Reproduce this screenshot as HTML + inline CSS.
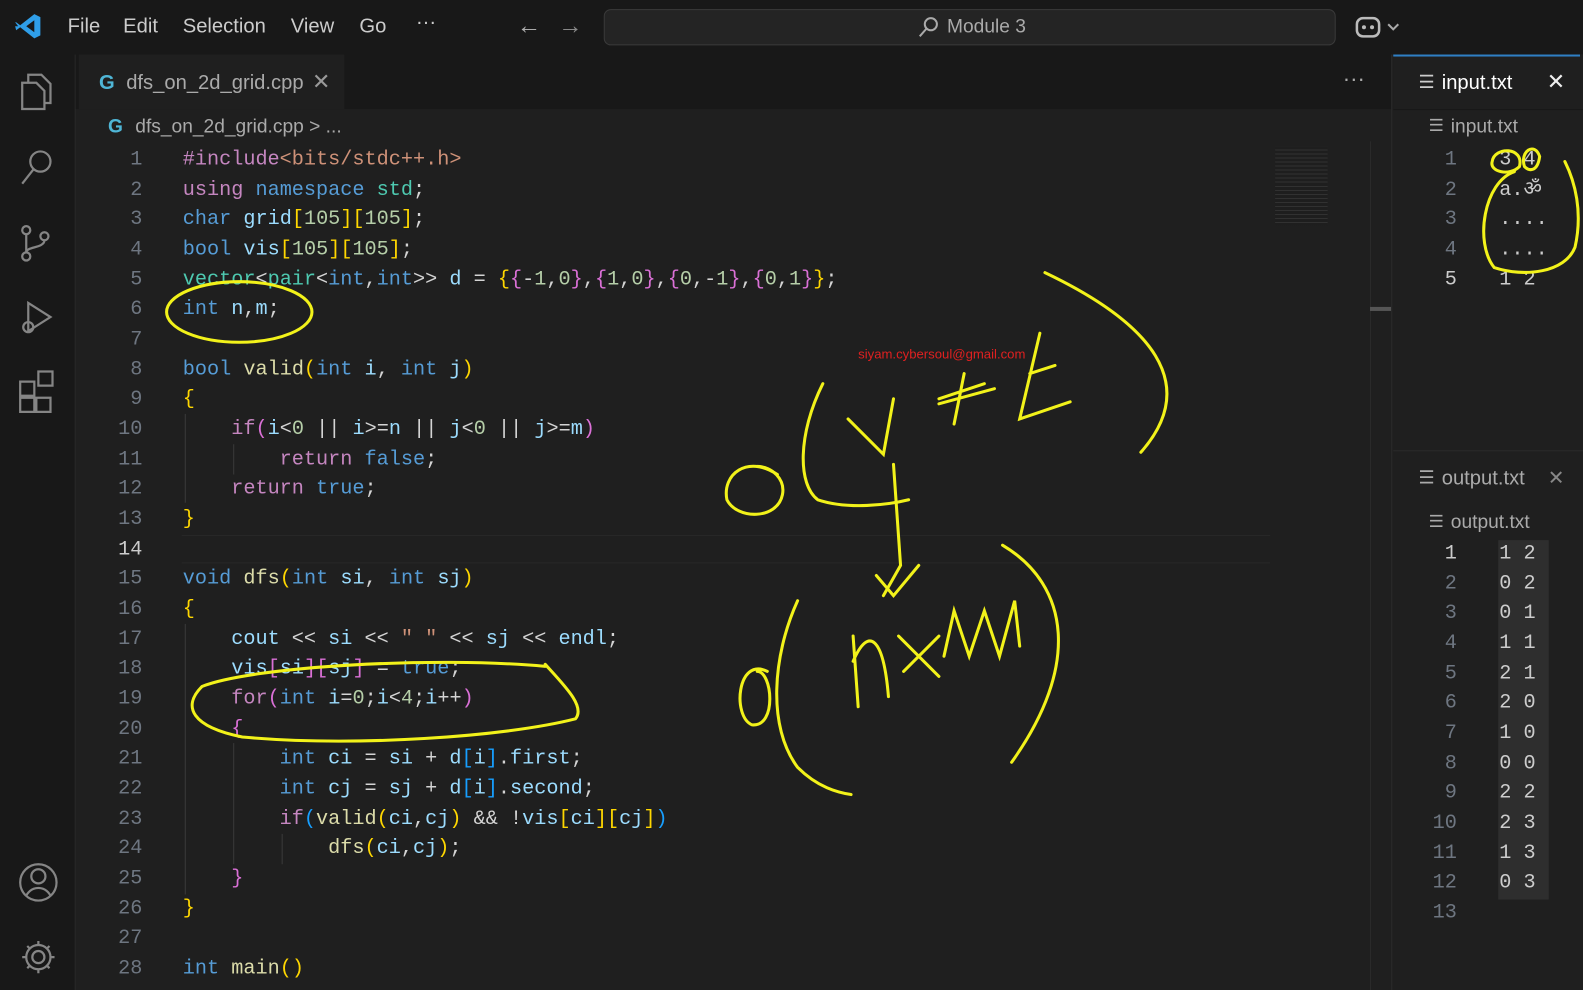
<!DOCTYPE html>
<html><head><meta charset="utf-8"><style>
*{margin:0;padding:0;box-sizing:border-box}
body{width:1583px;height:981px;background:#1f1f1f;overflow:hidden;font-family:"Liberation Sans",sans-serif;color:#ccc}
#wrap{position:relative;width:1568px;height:972px;transform:scale(1.0096);transform-origin:0 0}
.abs{position:absolute}
#title{left:0;top:0;width:1583px;height:54px;background:#181818}
.menu{top:15px;font-size:20px;color:#ccc}
#act{left:0;top:54px;width:75px;height:927px;background:#181818;border-right:1px solid #2a2a2a}
#tabs{left:75px;top:54px;width:1303px;height:54px;background:#181818}
.code{font-family:"Liberation Mono",monospace;font-size:20px;white-space:pre;line-height:29.67px}
.k{color:#569cd6}.c{color:#c586c0}.f{color:#dcdcaa}.v{color:#9cdcfe}.t{color:#4ec9b0}.n{color:#b5cea8}.s{color:#ce9178}.w{color:#d4d4d4}
.b1{color:#ffd700}.b2{color:#da70d6}.b3{color:#179fff}
.ln{color:#6e7681;text-align:right;width:60px}
#right{left:1378px;top:54px;width:205px;height:927px;background:#1f1f1f;border-left:1px solid #2b2b2b}
</style></head><body><div id="wrap">
<div id="title" class="abs"></div>
<svg class="abs" style="left:14px;top:12px" width="28" height="28" viewBox="0 0 28 28"><path d="M20 2 L26 5 V23 L20 26 L6 15 L2 18 L1 14 L4 14 1 10 2 10 6 13 Z" fill="#2f9ee8"/><path d="M20 8 V20 L12 14Z" fill="#181818"/></svg>
<div class="abs menu" style="left:67px">File</div>
<div class="abs menu" style="left:122px">Edit</div>
<div class="abs menu" style="left:181px">Selection</div>
<div class="abs menu" style="left:288px">View</div>
<div class="abs menu" style="left:356px">Go</div>
<div class="abs menu" style="left:412px;top:11px">···</div>
<div class="abs menu" style="left:512px;top:12px;font-size:24px;color:#aaa">←</div>
<div class="abs menu" style="left:553px;top:12px;font-size:24px;color:#888">→</div>
<div class="abs" style="left:598px;top:9px;width:725px;height:36px;background:#242424;border:1px solid #3a3a3a;border-radius:7px"></div>
<svg class="abs" style="left:908px;top:15px" width="24" height="24"><circle cx="14" cy="9" r="6" stroke="#aaa" stroke-width="2" fill="none"/><path d="M10 13 L3 21" stroke="#aaa" stroke-width="2"/></svg>
<div class="abs" style="left:938px;top:16px;font-size:19px;color:#aaa">Module 3</div>
<svg class="abs" style="left:1342px;top:14px" width="48" height="26"><rect x="2" y="4" width="22" height="18" rx="6" fill="none" stroke="#bbb" stroke-width="2.5"/><circle cx="9" cy="13" r="2" fill="#bbb"/><circle cx="17" cy="13" r="2" fill="#bbb"/><path d="M33 10 l5 5 5-5" stroke="#aaa" stroke-width="2" fill="none"/></svg>

<div id="act" class="abs"></div>
<svg class="abs" style="left:16px;top:68px" width="44" height="900" fill="none" stroke="#858585" stroke-width="2.2">
<path d="M6 14 h14 l8 8 v18 h-22z M12 14 v-8 h13 l9 9 v19 h-6"/>
<circle cx="24" cy="92" r="10"/><path d="M17 100 L6 114"/>
<circle cx="10" cy="160" r="4"/><circle cx="10" cy="186" r="4"/><circle cx="28" cy="166" r="4"/><path d="M10 164 v18 M28 170 c0 8 -18 6 -18 12"/>
<path d="M12 232 L34 246 L12 260 Z"/><circle cx="12" cy="256" r="5"/>
<path d="M4 310 h14 v14 h-14z M4 326 h14 v14 h-14z M20 326 h14 v14 h-14z M22 300 h14 v14 h-14z"/>
<circle cx="22" cy="806" r="18"/><circle cx="22" cy="800" r="7"/><path d="M10 819 c6 -10 18 -10 24 0"/>
<circle cx="22" cy="880" r="6"/><path d="M22 864 v4 M22 892 v4 M6 880 h4 M34 880 h4 M11 869 l3 3 M30 888 l3 3 M11 891 l3 -3 M30 872 l3 -3"/><circle cx="22" cy="880" r="12"/>
</svg>

<div id="tabs" class="abs"></div>
<div class="abs" style="left:78px;top:54px;width:263px;height:54px;background:#1f1f1f"></div>
<div class="abs" style="left:98px;top:71px;font-size:20px;color:#4fb6d6;font-weight:bold">G</div>
<div class="abs" style="left:125px;top:71px;font-size:20px;color:#aaa">dfs_on_2d_grid.cpp</div>
<div class="abs" style="left:309px;top:68px;font-size:22px;color:#999">✕</div>
<div class="abs" style="left:1330px;top:65px;font-size:22px;color:#aaa">···</div>
<div class="abs" style="left:107px;top:115px;font-size:19px;color:#4fb6d6;font-weight:bold">G</div>
<div class="abs" style="left:134px;top:115px;font-size:19px;color:#aaa">dfs_on_2d_grid.cpp &gt; ...</div>

<div class="abs" style="left:180px;top:530px;width:1078px;height:28px;border-top:1px solid #282828;border-bottom:1px solid #282828"></div>
<div class="abs" style="left:183px;top:410px;width:1px;height:88px;background:#3a3a3a"></div>
<div class="abs" style="left:231px;top:440px;width:1px;height:30px;background:#3a3a3a"></div>
<div class="abs" style="left:183px;top:618px;width:1px;height:268px;background:#3a3a3a"></div>
<div class="abs" style="left:231px;top:736px;width:1px;height:120px;background:#3a3a3a"></div>
<div class="abs" style="left:279px;top:826px;width:1px;height:30px;background:#3a3a3a"></div>

<div class="abs code ln" style="left:81px;top:144px">1
2
3
4
5
6
7
8
9
10
11
12
13
<span style="color:#ccc">14</span>
15
16
17
18
19
20
21
22
23
24
25
26
27
28</div>
<div class="abs code w" style="left:181px;top:144px"><span class="c">#include</span><span class="s">&lt;bits/stdc++.h&gt;</span>
<span class="c">using</span> <span class="k">namespace</span> <span class="t">std</span>;
<span class="k">char</span> <span class="v">grid</span><span class="b1">[</span><span class="n">105</span><span class="b1">][</span><span class="n">105</span><span class="b1">]</span>;
<span class="k">bool</span> <span class="v">vis</span><span class="b1">[</span><span class="n">105</span><span class="b1">][</span><span class="n">105</span><span class="b1">]</span>;
<span class="t">vector</span>&lt;<span class="t">pair</span>&lt;<span class="k">int</span>,<span class="k">int</span>&gt;&gt; <span class="v">d</span> = <span class="b1">{</span><span class="b2">{</span>-<span class="n">1</span>,<span class="n">0</span><span class="b2">}</span>,<span class="b2">{</span><span class="n">1</span>,<span class="n">0</span><span class="b2">}</span>,<span class="b2">{</span><span class="n">0</span>,-<span class="n">1</span><span class="b2">}</span>,<span class="b2">{</span><span class="n">0</span>,<span class="n">1</span><span class="b2">}</span><span class="b1">}</span>;
<span class="k">int</span> <span class="v">n</span>,<span class="v">m</span>;

<span class="k">bool</span> <span class="f">valid</span><span class="b1">(</span><span class="k">int</span> <span class="v">i</span>, <span class="k">int</span> <span class="v">j</span><span class="b1">)</span>
<span class="b1">{</span>
    <span class="c">if</span><span class="b2">(</span><span class="v">i</span>&lt;<span class="n">0</span> || <span class="v">i</span>&gt;=<span class="v">n</span> || <span class="v">j</span>&lt;<span class="n">0</span> || <span class="v">j</span>&gt;=<span class="v">m</span><span class="b2">)</span>
        <span class="c">return</span> <span class="k">false</span>;
    <span class="c">return</span> <span class="k">true</span>;
<span class="b1">}</span>

<span class="k">void</span> <span class="f">dfs</span><span class="b1">(</span><span class="k">int</span> <span class="v">si</span>, <span class="k">int</span> <span class="v">sj</span><span class="b1">)</span>
<span class="b1">{</span>
    <span class="v">cout</span> &lt;&lt; <span class="v">si</span> &lt;&lt; <span class="s">" "</span> &lt;&lt; <span class="v">sj</span> &lt;&lt; <span class="v">endl</span>;
    <span class="v">vis</span><span class="b2">[</span><span class="v">si</span><span class="b2">][</span><span class="v">sj</span><span class="b2">]</span> = <span class="k">true</span>;
    <span class="c">for</span><span class="b2">(</span><span class="k">int</span> <span class="v">i</span>=<span class="n">0</span>;<span class="v">i</span>&lt;<span class="n">4</span>;<span class="v">i</span>++<span class="b2">)</span>
    <span class="b2">{</span>
        <span class="k">int</span> <span class="v">ci</span> = <span class="v">si</span> + <span class="v">d</span><span class="b3">[</span><span class="v">i</span><span class="b3">]</span>.<span class="v">first</span>;
        <span class="k">int</span> <span class="v">cj</span> = <span class="v">sj</span> + <span class="v">d</span><span class="b3">[</span><span class="v">i</span><span class="b3">]</span>.<span class="v">second</span>;
        <span class="c">if</span><span class="b3">(</span><span class="f">valid</span><span class="b1">(</span><span class="v">ci</span>,<span class="v">cj</span><span class="b1">)</span> &amp;&amp; !<span class="v">vis</span><span class="b1">[</span><span class="v">ci</span><span class="b1">][</span><span class="v">cj</span><span class="b1">]</span><span class="b3">)</span>
            <span class="f">dfs</span><span class="b1">(</span><span class="v">ci</span>,<span class="v">cj</span><span class="b1">)</span>;
    <span class="b2">}</span>
<span class="b1">}</span>

<span class="k">int</span> <span class="f">main</span><span class="b1">()</span></div>

<div class="abs" style="left:1263px;top:145px;width:52px;height:78px;background:repeating-linear-gradient(#1f1f1f 0 3px,#444 3px 4px);opacity:.5"></div>
<div class="abs" style="left:1357px;top:140px;width:21px;height:841px;border-left:1px solid #2b2b2b"></div>
<div class="abs" style="left:1357px;top:304px;width:21px;height:4px;background:#555"></div>

<div class="abs" style="left:850px;top:343px;font-size:13px;color:#e02020">siyam.cybersoul@gmail.com</div>

<div id="right" class="abs"></div>
<div class="abs" style="left:1380px;top:54px;width:185px;height:54px;background:#1f1f1f;border-top:2px solid #2f7fc4"></div>
<div class="abs" style="left:1380px;top:108px;width:203px;height:1px;background:#181818"></div>
<div class="abs" style="left:1405px;top:71px;font-size:18px;color:#ccc">☰</div>
<div class="abs" style="left:1428px;top:71px;font-size:20px;color:#fff">input.txt</div>
<div class="abs" style="left:1532px;top:68px;font-size:22px;color:#eee">✕</div>
<div class="abs" style="left:1415px;top:115px;font-size:17px;color:#aaa">☰</div>
<div class="abs" style="left:1437px;top:115px;font-size:19px;color:#aaa">input.txt</div>
<div class="abs code ln" style="left:1383px;top:144px">1
2
3
4
<span style="color:#ccc">5</span></div>
<div class="abs code" style="left:1485px;top:144px;color:#ccc">3 4
a.ॐ
....
....
1 2</div>
<div class="abs" style="left:1380px;top:446px;width:203px;height:1px;background:#2b2b2b"></div>
<div class="abs" style="left:1405px;top:463px;font-size:18px;color:#aaa">☰</div>
<div class="abs" style="left:1428px;top:463px;font-size:20px;color:#aaa">output.txt</div>
<div class="abs" style="left:1533px;top:461px;font-size:20px;color:#888">✕</div>
<div class="abs" style="left:1415px;top:507px;font-size:17px;color:#aaa">☰</div>
<div class="abs" style="left:1437px;top:507px;font-size:19px;color:#aaa">output.txt</div>
<div class="abs" style="left:1484px;top:535px;width:50px;height:356px;background:#2e2e2e"></div>
<div class="abs code ln" style="left:1383px;top:534px"><span style="color:#ccc">1</span>
2
3
4
5
6
7
8
9
10
11
12
13</div>
<div class="abs code" style="left:1485px;top:534px;color:#ccc">1 2
0 2
0 1
1 1
2 1
2 0
1 0
0 0
2 2
2 3
1 3
0 3</div>

<svg class="abs" style="left:0;top:0" width="1583" height="981" fill="none" stroke="#f2f21a" stroke-width="3" stroke-linecap="round">
<ellipse cx="237" cy="309" rx="72" ry="30"/>
<path d="M540 660 C430 650 250 660 200 680 C180 700 190 720 240 730 C350 740 500 730 570 712 C580 700 560 680 540 658"/>
<path d="M770 470 C740 450 715 470 720 495 C730 515 770 515 775 490 C778 475 765 462 750 462"/>
<path d="M815 380 C790 430 790 480 810 495 C840 505 880 500 900 495"/>
<path d="M840 415 L875 450 L885 395"/>
<path d="M930 400 L985 385 M955 370 L945 420 M930 395 L975 380"/>
<path d="M1030 330 L1010 415 L1060 398 M1020 370 L1045 362"/>
<path d="M1035 270 C1140 320 1190 380 1130 448"/>
<path d="M885 460 L892 560 L875 590 M868 570 L885 590 L910 560"/>
<path d="M760 665 C730 650 725 710 745 718 C770 720 765 665 750 665"/>
<path d="M790 595 C765 650 760 720 790 760 C810 780 830 785 843 787"/>
<path d="M850 700 L845 630 M845 655 C860 620 875 630 880 690"/>
<path d="M890 630 L930 670 M930 630 L895 665"/>
<path d="M935 650 L945 605 L960 650 L975 605 L990 650 L1005 595 L1010 640"/>
<path d="M993 540 C1060 580 1070 660 1002 755"/>
<path d="M1478 160 C1480 145 1510 145 1505 165 C1495 175 1475 170 1478 160 M1510 165 C1505 150 1520 140 1525 155 C1523 170 1515 170 1510 165"/>
<path d="M1500 170 C1470 180 1460 240 1480 265 C1510 275 1550 270 1560 245 C1568 210 1560 180 1550 160"/>
</svg>
</div></body></html>
